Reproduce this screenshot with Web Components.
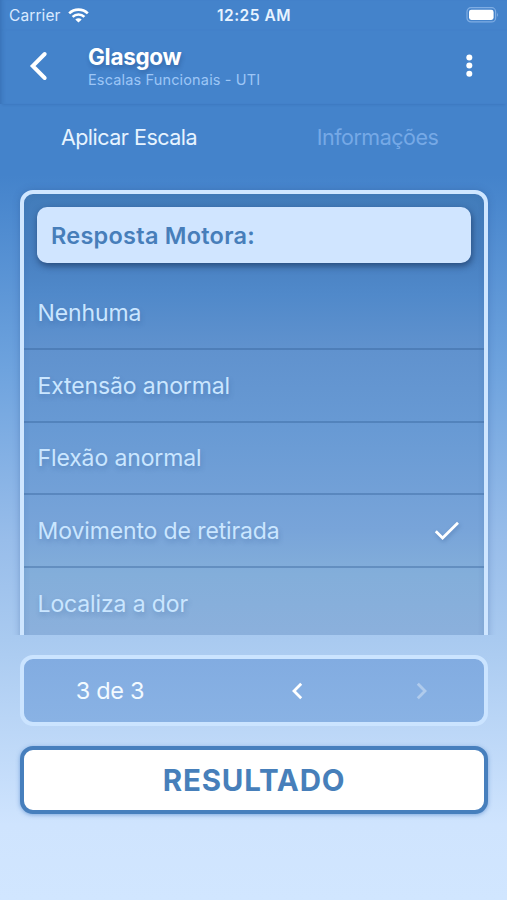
<!DOCTYPE html>
<html lang="pt-BR">
<head>
<meta charset="utf-8">
<title>Glasgow</title>
<style>
  body {
    margin: 0;
    font-family: Inter, "Liberation Sans", sans-serif;
    color: white;
  }
</style>
</head>
<body>
<scale-app>
  <status-bar slot="top" carrier="Carrier" time="12:25 AM"></status-bar>
  <nav-header slot="top">
    <span slot="title">Glasgow</span>
    <span slot="subtitle">Escalas Funcionais - UTI</span>
  </nav-header>
  <tab-bar slot="top">
    <tab-item active>Aplicar Escala</tab-item>
    <tab-item>Informações</tab-item>
  </tab-bar>
  <question-card>
    <span slot="title">Resposta Motora:</span>
    <option-row>Nenhuma</option-row>
    <option-row>Extensão anormal</option-row>
    <option-row>Flexão anormal</option-row>
    <option-row checked>Movimento de retirada</option-row>
    <option-row>Localiza a dor</option-row>
  </question-card>
  <page-nav slot="bottom">3 de 3</page-nav>
  <result-button slot="bottom">RESULTADO</result-button>
</scale-app>

<script>
class BaseElement extends HTMLElement {
  constructor() {
    super();
    this.attachShadow({ mode: 'open' });
  }

  connectedCallback() {
    this.shadowRoot.innerHTML = this.render();
  }
}

class ScaleApp extends BaseElement {
  render() {
    return `
      <style>
        :host {
          display: flex;
          flex-direction: column;
          height: 900px;
          overflow: hidden;
          background: linear-gradient(#4483cb 175px, #6ea3de 370px, #98bdea 540px, #a9caf0 640px, #cfe4fe 825px, #d1e6ff);
        }

        main {
          height: 465px;
          overflow: hidden;
          padding: 20px 19px 0 20px;
          box-sizing: border-box;
        }

        footer {
          display: flex;
          flex-direction: column;
          gap: 20px;
          padding: 20px 19px 0 20px;
        }
      </style>
      <slot name='top'></slot>
      <main><slot></slot></main>
      <footer><slot name='bottom'></slot></footer>
    `;
  }
}

class StatusBar extends BaseElement {
  render() {
    return `
      <style>
        :host {
          display: grid;
          grid-template-columns: 1fr auto 1fr;
          align-items: center;
          height: 30px;
          padding: 0 8px 0 9px;
          font-size: 15.5px;
          box-shadow: inset 5px 0 5px -4px rgba(20, 60, 120, 0.3);
        }

        .carrier {
          display: flex;
          align-items: center;
          gap: 7px;
          letter-spacing: 0.1px;
          color: #d9eaff;
        }

        .time {
          font-weight: 600;
          letter-spacing: 0.5px;
          color: #e8f3ff;
        }

        .battery {
          justify-self: end;
        }

        svg {
          display: block;
        }
      </style>
      <div class='carrier'>
        <span>${this.getAttribute('carrier')}</span>
        <svg width='21' height='15' viewBox='0 0 21 15' fill='none' stroke='white' stroke-width='2.6'>
          <path d='M1.2 5.4C6.3 .3 14.7 .3 19.8 5.4'/>
          <path d='M4.6 8.9C7.9 5.7 13.1 5.7 16.4 8.9'/>
          <path d='M10.5 14.6L7.3 11.4C9.1 9.8 11.9 9.8 13.7 11.4Z' fill='white' stroke='none'/>
        </svg>
      </div>
      <div class='time'>${this.getAttribute('time')}</div>
      <svg class='battery' width='33' height='16' viewBox='0 0 33 16'>
        <rect x='1' y='.7' width='28.6' height='14.2' rx='4' fill='none' stroke='#7fadE3' stroke-width='1.2'/>
        <rect x='3' y='2.7' width='24.6' height='10.2' rx='2.3' fill='white'/>
        <path d='M31.2 5.6q1.4 2.2 0 4.4z' fill='#8fb9ea'/>
      </svg>
    `;
  }
}

class NavHeader extends BaseElement {
  render() {
    return `
      <style>
        :host {
          display: flex;
          height: 74px;
          box-sizing: border-box;
          padding: 0 32px 0 28px;
          box-shadow: inset 5px 0 5px -4px rgba(20, 60, 120, 0.3), 0 3px 2px -2px rgba(40, 90, 160, 0.25);
        }

        .back {
          margin: 20px 38px 0 0;
          width: 22px;
        }

        .titles {
          flex: 1;
          display: flex;
          flex-direction: column;
          padding-top: 13px;
        }

        ::slotted([slot='title']) {
          font-size: 22.5px;
          line-height: 28px;
          font-weight: 700;
          letter-spacing: -0.3px;
          text-shadow: 1px 3px 4px rgba(20, 50, 100, 0.3);
        }

        ::slotted([slot='subtitle']) {
          font-size: 14.5px;
          line-height: 17px;
          color: #9dc6f6;
          letter-spacing: 0.15px;
        }

        .more {
          margin-top: 24px;
        }
      </style>
      <svg class='back' width='22' height='32' viewBox='0 0 22 32' fill='none'>
        <path d='M16.7 4L4.7 16L16.7 28' stroke='white' stroke-width='3.9' stroke-linecap='round' stroke-linejoin='miter'/>
      </svg>
      <div class='titles'>
        <slot name='title'></slot>
        <slot name='subtitle'></slot>
      </div>
      <svg class='more' width='12' height='24' viewBox='0 0 12 24' fill='white'>
        <circle cx='6.3' cy='3.5' r='3'/>
        <circle cx='6.3' cy='11.6' r='3'/>
        <circle cx='6.3' cy='19.7' r='3'/>
      </svg>
    `;
  }
}

class TabBar extends BaseElement {
  render() {
    return `
      <style>
        :host {
          display: grid;
          grid-template-columns: 258px 239px;
          height: 66px;
        }
      </style>
      <slot></slot>
    `;
  }
}

class TabItem extends BaseElement {
  render() {
    return `
      <style>
        :host {
          display: flex;
          align-items: center;
          justify-content: center;
          font-size: 21.5px;
          letter-spacing: -0.5px;
          color: #76a9e6;
        }

        :host([active]) {
          color: #e6f3ff;
        }
      </style>
      <slot></slot>
    `;
  }
}

class QuestionCard extends BaseElement {
  render() {
    return `
      <style>
        :host {
          display: block;
          height: 560px;
          box-sizing: border-box;
          border: 4px solid #cfe6ff;
          border-radius: 13px;
          padding-top: 13px;
          background: linear-gradient(#427cba 0, #4880c1 60px, #5089ca 100px, #6092ce 155px, #689ad4 235px, #78a4d9 335px, #83aeda 380px, #8bb0dc 440px);
          box-shadow: 0 0 7px rgba(40, 80, 140, 0.35), inset 0 0 6px rgba(40, 80, 130, 0.15);
        }

        .title {
          display: flex;
          align-items: center;
          height: 56px;
          margin: 0 13px 14px;
          padding-left: 14px;
          border-radius: 10px;
          background: #d0e5ff;
          color: #477eba;
          font-size: 23.5px;
          font-weight: 600;
          letter-spacing: 0.25px;
          box-shadow: 1px 3px 7px rgba(20, 45, 85, 0.65);
        }
      </style>
      <div class='title'><slot name='title'></slot></div>
      <slot></slot>
    `;
  }
}

class OptionRow extends BaseElement {
  render() {
    const check = `
      <svg width='26' height='20' viewBox='0 0 26 20' fill='none' stroke='white' stroke-width='2.8'>
        <path d='M1.8 10.2L8.6 17L24 1.8'/>
      </svg>`;
    return `
      <style>
        :host {
          display: flex;
          align-items: center;
          justify-content: space-between;
          height: 72.8px;
          box-sizing: border-box;
          padding: 1px 24px 0 13.5px;
          border-bottom: 2px solid rgba(50, 95, 150, 0.38);
          font-size: 23px;
          letter-spacing: -0.12px;
          color: #cae6ff;
          text-shadow: 1px 3px 5px rgba(40, 80, 140, 0.28);
        }

        svg {
          filter: drop-shadow(1px 2px 2px rgba(40, 80, 140, 0.35));
        }
      </style>
      <slot></slot>
      ${this.hasAttribute('checked') ? check : ''}
    `;
  }
}

class PageNav extends BaseElement {
  render() {
    return `
      <style>
        :host {
          display: grid;
          grid-template-columns: 172px 202px 48px;
          align-items: center;
          justify-items: center;
          height: 71px;
          box-sizing: border-box;
          border: 4px solid #cbe4ff;
          border-radius: 13px;
          background: linear-gradient(#82ace1, #89b2e4);
          font-size: 23.5px;
          letter-spacing: -0.3px;
          color: #f2faff;
        }

        .next {
          opacity: 0.35;
        }
      </style>
      <span><slot></slot></span>
      <svg width='12' height='18' viewBox='0 0 12 18' fill='none' stroke='white' stroke-width='2.8'>
        <path d='M10.2 1.8L3 9L10.2 16.2'/>
      </svg>
      <svg class='next' width='12' height='18' viewBox='0 0 12 18' fill='none' stroke='white' stroke-width='2.8'>
        <path d='M1.8 1.8L9 9L1.8 16.2'/>
      </svg>
    `;
  }
}

class ResultButton extends BaseElement {
  render() {
    return `
      <style>
        :host {
          display: flex;
          align-items: center;
          justify-content: center;
          height: 68px;
          box-sizing: border-box;
          border: 4px solid #477fbd;
          border-radius: 13px;
          background: white;
          color: #477fba;
          font-size: 29.5px;
          font-weight: 700;
          letter-spacing: 0.8px;
          box-shadow: 0 1px 4px rgba(50, 110, 190, 0.5);
        }
      </style>
      <slot></slot>
    `;
  }
}

customElements.define('scale-app', ScaleApp);
customElements.define('status-bar', StatusBar);
customElements.define('nav-header', NavHeader);
customElements.define('tab-bar', TabBar);
customElements.define('tab-item', TabItem);
customElements.define('question-card', QuestionCard);
customElements.define('option-row', OptionRow);
customElements.define('page-nav', PageNav);
customElements.define('result-button', ResultButton);
</script>
</body>
</html>
